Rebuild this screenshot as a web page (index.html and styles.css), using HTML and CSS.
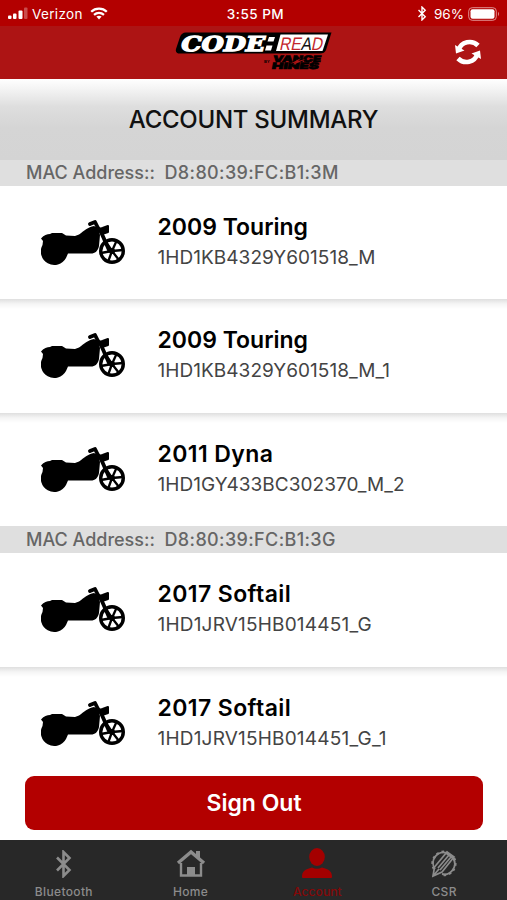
FILE: index.html
```html
<!DOCTYPE html>
<html lang="en">
<head>
<meta charset="utf-8">
<title>Account Summary</title>
<link rel="stylesheet" href="styles.css">
</head>
<body>
<svg width="0" height="0" class="defs" aria-hidden="true">
  <symbol id="bike" viewBox="0 0 84 46">
    <path d="M0 18.500 C3 15 6 14 9 14 L11 13 H21 L25 15.500 L34 16 L38 14.500 C43 11 47 7 53 6 L57 8 L59 15 L58 26 C57 31 54 33.500 50 33.500 H27 L25 38 A13 13 0 1 1 1.500 25 L2 21 Z"/>
    <path d="M49 4 L54 2 L57 8 L60 12 L68 30" fill="none" stroke="#000" stroke-width="3.800" stroke-linejoin="round" stroke-linecap="round"/>
    <path d="M58 9 L61.500 8 L67 6 V12 L61 14 Z" stroke="#000" stroke-width="2" stroke-linejoin="round"/>
    <circle cx="71" cy="31" r="11.300" fill="none" stroke="#000" stroke-width="3.400"/>
    <path d="M71 31 L82 30 M71 31 L75.500 21 M71 31 L65 22 M71 31 L60 33 M71 31 L67 42 M71 31 L78 40" stroke="#000" stroke-width="2.300"/>
    <circle cx="71" cy="31" r="3"/>
  </symbol>
  <symbol id="bt" viewBox="0 0 16 28">
    <path d="M1.500 7.500 L14 20 L8 26 V2 L14 8 L1.500 20.500" fill="none" stroke="currentColor" stroke-width="2.600"/>
  </symbol>
</svg>
<div class="app">
  <header>
    <div class="status">
      <div class="carrier">
        <svg width="20" height="13" viewBox="0 0 20 13" fill="#fff"><rect x="0" y="8.500" width="3.500" height="3.500" rx="1"/><rect x="5" y="6.500" width="3.500" height="5.500" rx="1"/><rect x="10.500" y="3.500" width="4" height="8.500" rx="1"/><rect x="16" y="0.500" width="3.500" height="11.500" rx="1" opacity=".3"/></svg>
        <span>Verizon</span>
        <svg width="18" height="13" viewBox="0 0 18 13" fill="none" stroke="#fff"><path d="M1.200 4.800 C5.500 .6 12.500 .6 16.800 4.800" stroke-width="2.300"/><path d="M4 7.900 C7 5.300 11 5.300 14 7.900" stroke-width="2.200"/><path d="M6.400 9.600 C8 8.400 10 8.400 11.600 9.600 L9 12.500 Z" fill="#fff" stroke="none"/></svg>
      </div>
      <div class="time">3:55 PM</div>
      <div class="power">
        <svg width="10" height="15" color="#fff"><use href="#bt"/></svg>
        <span>96%</span>
        <svg width="32" height="14" viewBox="0 0 32 14"><rect x=".7" y=".7" width="27.600" height="12.600" rx="3.500" fill="none" stroke="#df8f8f"/><rect x="2.500" y="2.300" width="24" height="9.400" rx="2" fill="#fff"/><path d="M30 4.800 Q32 7 30 9.200Z" fill="#df8f8f"/></svg>
      </div>
    </div>
    <div class="nav">
      <svg class="logo" width="160" height="40" viewBox="0 0 160 40">
        <path d="M12 .5 H157.500 L152 18 Q150.500 21.500 146 21.500 H6 Q1 21.500 2 17 L6 5 Q7.500 .5 12 .5Z" fill="#000"/>
        <path d="M106.500 2.500 H154 L148.500 19 H102Z" fill="#fff"/>
        <text transform="translate(5.500 18.500) skewX(-14)" class="code" textLength="84" lengthAdjust="spacingAndGlyphs">CODE</text>
        <path d="M95 5 H101 L99.500 9.500 H93.500Z M92.500 13.500 H98.500 L97 18.500 H91Z" fill="#fff"/>
        <text transform="translate(105 17.500) skewX(-12)" class="read" textLength="43" lengthAdjust="spacingAndGlyphs">RE<tspan fill="#111">A</tspan>D</text>
        <text x="90" y="30.500" class="by">BY</text>
        <text transform="translate(98.500 29.500) skewX(-10)" class="vance" textLength="48" lengthAdjust="spacingAndGlyphs">VANCE</text>
        <text transform="translate(97.500 37) skewX(-10)" class="vance" textLength="47" lengthAdjust="spacingAndGlyphs">HINES</text>
        <path d="M116 32 L127 26 L124 29 L132 27 L119 33 L122 30Z" fill="#ad1414"/>
      </svg>
      <svg class="refresh" width="28" height="26" viewBox="0 0 28 26" fill="none" stroke="#fff" stroke-width="4.700">
        <path d="M4.800 11 C7 2.500 18 .5 24 6.500"/><path d="M23.200 15 C21 23.500 10 25.500 4 19.500"/>
        <path d="M1 6 L2 14.500 L10.500 11.500Z M27 20 L26 11.500 L17.500 14.500Z" fill="#fff" stroke="none"/>
      </svg>
    </div>
  </header>
  <h1>ACCOUNT SUMMARY</h1>
  <main>
    <h2 class="first">MAC Address::&nbsp; <span>D8:80:39:FC:B1:3M</span></h2>
    <section>
      <div class="row"><svg class="bike"><use href="#bike"/></svg><div><h3>2009 Touring</h3><p>1HD1KB4329Y601518_M</p></div></div>
      <div class="row"><svg class="bike"><use href="#bike"/></svg><div><h3>2009 Touring</h3><p>1HD1KB4329Y601518_M_1</p></div></div>
      <div class="row"><svg class="bike"><use href="#bike"/></svg><div><h3 class="wide">2011 Dyna</h3><p>1HD1GY433BC302370_M_2</p></div></div>
    </section>
    <h2>MAC Address::&nbsp; <span>D8:80:39:FC:B1:3G</span></h2>
    <section>
      <div class="row"><svg class="bike"><use href="#bike"/></svg><div><h3 class="wide">2017 Softail</h3><p class="wide">1HD1JRV15HB014451_G</p></div></div>
      <div class="row"><svg class="bike"><use href="#bike"/></svg><div><h3 class="wide">2017 Softail</h3><p class="wide">1HD1JRV15HB014451_G_1</p></div></div>
    </section>
  </main>
  <div class="action"><button>Sign Out</button></div>
  <nav class="tabs">
    <a><svg width="17" height="28"><use href="#bt"/></svg><span>Bluetooth</span></a>
    <a><svg width="30" height="29" viewBox="0 0 30 29"><path d="M2 14 L15 3 L28 14" fill="none" stroke="currentColor" stroke-width="3.400"/><path d="M5 14 V26.500 H25 V14" fill="none" stroke="currentColor" stroke-width="2.400"/><path d="M11 18 H19 V27 H11Z M20 2 H24 V10 L20 7Z" fill="currentColor"/></svg><span>Home</span></a>
    <a class="active"><svg width="30" height="30" viewBox="0 0 30 30" fill="currentColor"><ellipse cx="15" cy="9" rx="7.800" ry="9"/><path d="M0 29 C0 23 3 21.500 10 19.500 Q15 22 20 19.500 C27 21.500 30 23 30 29 Q30 30 29 30 H1 Q0 30 0 29Z"/></svg><span>Account</span></a>
    <a><svg width="28" height="29" viewBox="0 0 28 29" fill="none" stroke="currentColor"><path d="M5 20 A10.500 10.500 0 0 1 17 4 M23 9 A10.500 10.500 0 0 1 12 25" stroke-width="1.800"/><path d="M4 20 A11.700 11.700 0 0 1 17 3 M24 9 A11.700 11.700 0 0 1 12 26" stroke-width="2.500" stroke-dasharray="2.500 2.800"/><path d="M3 27 L4.500 18 L17 3 L24 8 L12 23Z M8 19 L19 6 M10 21 L21 8 M3 27 L9 20 M16 4 L24 10" stroke-width="1.700"/></svg><span>CSR</span></a>
  </nav>
</div>
</body>
</html>
```
FILE: styles.css
```css
* { box-sizing: border-box; }
body { margin: 0; font-family: Inter, "Liberation Sans", sans-serif; background: #fff; }
h1, h2, h3, p { margin: 0; }
.defs { display: block; }
.app { width: 507px; height: 900px; display: flex; flex-direction: column; overflow: hidden; }
header { flex: none; height: 79px; color: #fff; }
.status { height: 26px; background: #b30000; display: grid; grid-template-columns: 1fr auto 1fr; align-items: center; padding: 1px 7px 0 8px; font-size: 13.5px; }
.carrier, .power { display: flex; align-items: center; }
.carrier span { margin: 0 7px 0 4px; letter-spacing: .35px; }
.time { font-weight: 500; font-size: 13.5px; letter-spacing: .5px; padding-left: 3px; }
.power { justify-content: flex-end; }
.power span { margin: 0 4px 0 7px; }
.nav { height: 53px; background: #ad1414; display: grid; grid-template-columns: 1fr auto 1fr; align-items: center; padding: 0 25px 0 26px; }
.logo { grid-column: 2; margin-top: -1px; }
.refresh { justify-self: end; margin-top: -2px; }
.code { font: bold 20.500px "DejaVu Serif", serif; fill: #fff; stroke: #fff; stroke-width: 1.300px; }
.read { font: 18px "Liberation Sans", sans-serif; fill: #c3262c; }
.by { font: bold 4px "Liberation Sans", sans-serif; }
.vance { font: 900 9px Inter, sans-serif; stroke: #000; stroke-width: .6px; }
h1 { flex: none; height: 81px; line-height: 81px; text-align: center; font-size: 24px; font-weight: 500; letter-spacing: -.27px; color: #111; background: linear-gradient(#fff 0, #f4f4f4 12%, #dedede 34%, #d5d5d5 60%, #d4d4d4); }
main { flex: 1; min-height: 0; overflow: hidden; }
h2 { height: 27px; line-height: 28px; padding-left: 26px; background: #dfdfdf; color: #666; font-size: 18px; font-weight: 500; }
h2 span { letter-spacing: .37px; }
h2.first { height: 25.500px; line-height: 25px; }
.row { height: 113.500px; display: flex; align-items: flex-start; background: #fff; }
.row + .row { background: linear-gradient(#dfdfdf, #f5f5f5 5px, #fff 10px); }
.bike { width: 84px; height: 46px; margin: 34px 33px 0 41px; flex: none; }
h3 { font-size: 23px; line-height: 28px; font-weight: 600; margin: 27px 0 0 -.5px; color: #000; }
h3.wide { letter-spacing: .4px; }
p { font-size: 19px; line-height: 24px; margin: 5px 0 0 -.5px; color: #444; letter-spacing: .05px; }
p.wide { letter-spacing: .2px; }
.action { flex: none; height: 75px; padding: 11px 25px 0; background: #fff; }
button { width: 458px; height: 54px; border: 0; border-radius: 9px; background: #b30000; color: #fff; font: 600 23px Inter, sans-serif; }
.tabs { flex: none; height: 60px; background: #282828; display: grid; grid-template-columns: repeat(4, 1fr); color: #8c8c8c; }
.tabs a { display: flex; flex-direction: column; align-items: center; justify-content: flex-end; padding: 0 0 1px 1px; font-size: 12px; line-height: 15px; letter-spacing: .35px; }
.tabs span { margin-top: 6px; font-weight: 500; }
.tabs .active { color: #a40000; }
.tabs .active span { color: #850808; letter-spacing: .1px; }
```
